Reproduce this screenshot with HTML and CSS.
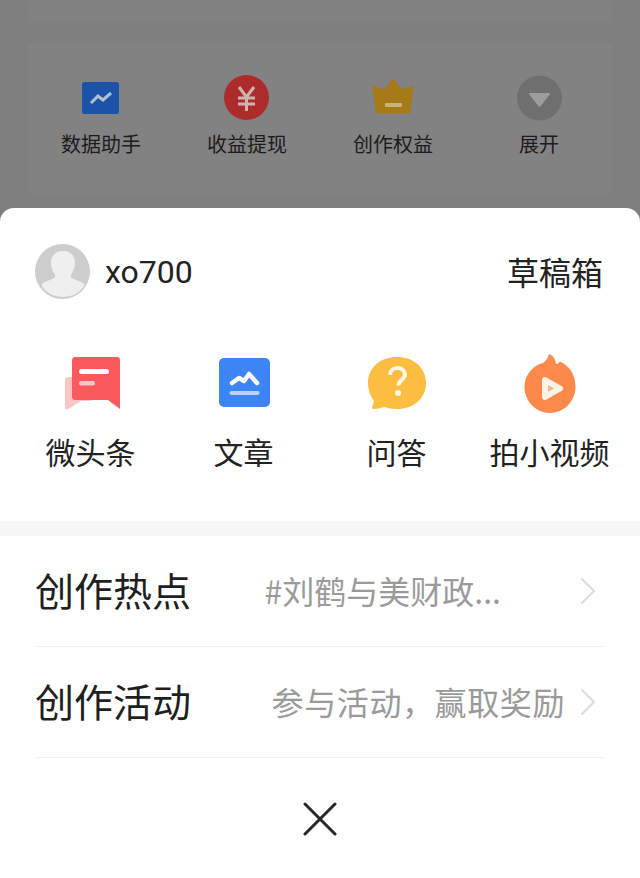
FILE: index.html
```html
<!DOCTYPE html>
<html lang="zh-CN">
<head>
<meta charset="utf-8">
<title>创作</title>
<link rel="stylesheet" href="styles.css">
</head>
<body>
<div class="screen">
  <div class="backdrop">
    <div class="card card-clipped"></div>
    <div class="card tools">
      <div class="tool">
        <svg class="tool-icon" viewBox="0 0 48 48"><rect x="5" y="6" width="37" height="32" rx="2.500" fill="#1c53a8"/><path d="M14 27l7-7 5 4 8-7" fill="none" stroke="#b4bfd0" stroke-width="3"/></svg>
        <span>数据助手</span>
      </div>
      <div class="tool">
        <svg class="tool-icon" viewBox="0 0 48 48"><circle cx="23.500" cy="21.500" r="22.500" fill="#ad2b2b"/><path d="M16 11l7.500 10 7.500-10M15 22h17M15 28h17M23.500 21v14" fill="none" stroke="#cfb3b3" stroke-width="3"/></svg>
        <span>收益提现</span>
      </div>
      <div class="tool">
        <svg class="tool-icon" viewBox="0 0 48 48"><path d="M24 3l9 11 11-4-3 27H7L4 10l11 4z" fill="#a67b17" stroke="#a67b17" stroke-linejoin="round"/><rect x="16" y="27" width="17" height="4" rx="1" fill="#c9b27a"/></svg>
        <span>创作权益</span>
      </div>
      <div class="tool">
        <svg class="tool-icon" viewBox="0 0 48 48"><circle cx="24.500" cy="22" r="22.500" fill="#6f6f6f"/><path d="M15 18h19L24.500 30z" fill="#9d9d9d" stroke="#9d9d9d" stroke-width="2" stroke-linejoin="round"/></svg>
        <span>展开</span>
      </div>
    </div>
  </div>

  <div class="sheet">
    <div class="user-row">
      <div class="user">
        <svg class="avatar" viewBox="0 0 55 55">
          <circle cx="27.500" cy="27.500" r="27.500" fill="#cdcdcd"/>
          <path d="M28 7c8 0 12 5 12 12 0 5-2 9-4 12-.5 2 0 3 3 4l9 4c1.500 .8 1.500 2 .5 4-4.500 6-12 10-20.500 10S11.500 49 7.500 43c-1-2-1-3.200 .5-4l9-4c3-1 3.500-2 3-4-2-3-4-7-4-12 0-7 4-12 12-12z" fill="#efefef"/>
        </svg>
        <span class="username">xo700</span>
      </div>
      <span class="drafts">草稿箱</span>
    </div>

    <div class="actions">
      <div class="action">
        <svg class="action-icon" viewBox="0 0 80 60">
          <path d="M14 26c0-1.500 1-3 3-3h22c2 0 3 1 3 3v18c0 2-1 3-3 3H30l-11 7c-3 1.500-5 2-5 0z" fill="#ffc4c4"/>
          <path d="M21 6c0-1.500 1-3 3-3h42c2 0 3 1 3 3v49L57 46H24c-2 0-3-1-3-3z" fill="#fb5a5c"/>
          <rect x="28" y="15" width="30" height="5" rx="2.500" fill="#fff"/>
          <rect x="28" y="27" width="16" height="4.500" rx="2.200" fill="#ffc4c4"/>
        </svg>
        <span>微头条</span>
      </div>
      <div class="action">
        <svg class="action-icon" viewBox="0 0 80 60">
          <rect x="15" y="4" width="51" height="49" rx="5" fill="#3d85f6"/>
          <path d="M28 29l7-5 5 3 5-7 8 9" fill="none" stroke="#fff" stroke-width="4.500" stroke-linecap="round" stroke-linejoin="round"/>
          <rect x="25.500" y="37" width="30" height="4" rx="2" fill="#b8d3fc"/>
        </svg>
        <span>文章</span>
      </div>
      <div class="action">
        <svg class="action-icon" viewBox="0 0 80 60">
          <path d="M40 3c16 0 29 10 29 26S56 55 40 55c-5 0-9-.8-13-2-3 1-7 2-10 2-2 0-2.500-1-1.500-3 1-2 1.500-4 1-6-3-4-5.500-10-5.500-17C11 13 24 3 40 3z" fill="#fdbe3f"/>
          <path d="M33 21c0-4 3-7 7.500-7s7.500 3 7.500 6.500c0 5-6.500 5.500-6.500 11" fill="none" stroke="#fff7e4" stroke-width="4"/>
          <circle cx="41" cy="39" r="3" fill="#fff7e4"/>
        </svg>
        <span>问答</span>
      </div>
      <div class="action">
        <svg class="action-icon" viewBox="0 0 80 60">
          <path d="M39 0c3 1 5 3 6 6l1 4c2 .5 3-1 3.500-2.500C59 11 65.500 20 65.500 33 65.500 47 54 59 40 59S14.500 47 14.500 33C14.500 20 24 11 33 9c3-2 5-5 6-9z" fill="#fd8a4b"/>
          <path d="M35 26l15 8.500-15 8.500z" fill="#fbb48a" stroke="#fff3e8" stroke-width="6" stroke-linejoin="round"/>
        </svg>
        <span>拍小视频</span>
      </div>
    </div>

    <div class="band"></div>

    <div class="rows">
      <div class="row">
        <span class="row-title">创作热点</span>
        <span class="row-note row-note-hot">#刘鹤与美财政...</span>
        <svg class="chevron" viewBox="0 0 16 28"><path d="M1.500 1.500L14 14 1.500 26.500" fill="none" stroke="#dcdcdc" stroke-width="2"/></svg>
      </div>
      <div class="row">
        <span class="row-title">创作活动</span>
        <span class="row-note row-note-wide">参与活动&#xFF0C;赢取奖励</span>
        <svg class="chevron" viewBox="0 0 16 28"><path d="M1.500 1.500L14 14 1.500 26.500" fill="none" stroke="#dcdcdc" stroke-width="2"/></svg>
      </div>
    </div>

    <div class="close">
      <svg class="close-icon" viewBox="0 0 34 34"><path d="M2 2l30 30M32 2L2 32" fill="none" stroke="#262626" stroke-width="3" stroke-linecap="round"/></svg>
    </div>
  </div>
</div>
</body>
</html>
```

FILE: styles.css
```css
* {
  box-sizing: border-box;
}

html,
body {
  margin: 0;
  padding: 0;
}

body {
  font-family: "Noto Sans CJK SC", "Noto Sans", sans-serif;
  background: #7f7f7f;
}

.screen {
  width: 640px;
  height: 878px;
  display: flex;
  flex-direction: column;
  overflow: hidden;
}

.backdrop {
  height: 208px;
  flex: none;
  padding: 0 28px;
  display: flex;
  flex-direction: column;
  gap: 20px;
  background: #7f7f7f;
}

.card {
  background: #828282;
  border-radius: 4px;
}

.card-clipped {
  height: 23px;
}

.tools {
  height: 150px;
  display: grid;
  grid-template-columns: repeat(4, 1fr);
  padding-top: 33px;
}

.tool {
  display: flex;
  flex-direction: column;
  align-items: center;
  font-size: 20px;
  line-height: 28px;
  color: #1c1c1c;
}

.tool-icon {
  width: 48px;
  height: 48px;
  margin-bottom: 6px;
  overflow: visible;
}

.sheet {
  flex: 1;
  display: flex;
  flex-direction: column;
  background: #fff;
  border-radius: 14px 14px 0 0;
}

.user-row {
  display: flex;
  justify-content: space-between;
  align-items: center;
  padding: 36px 37px 0 35px;
}

.user {
  display: flex;
  align-items: center;
  gap: 15px;
}

.avatar {
  width: 55px;
  height: 55px;
}

.username {
  font-family: Roboto, sans-serif;
  font-size: 32px;
  color: #222;
}

.drafts {
  font-size: 32px;
  line-height: 44px;
  padding-bottom: 2px;
  color: #222;
}

.actions {
  display: grid;
  grid-template-columns: repeat(4, 153px);
  padding: 55px 13px 0 14px;
  height: 222px;
}

.action {
  display: flex;
  flex-direction: column;
  align-items: center;
  font-size: 30px;
  line-height: 42px;
  color: #222;
  white-space: nowrap;
}

.action-icon {
  width: 80px;
  height: 60px;
  margin-bottom: 16px;
}

.band {
  height: 15px;
  flex: none;
  background: #f7f7f7;
}

.rows {
  padding: 0 35px;
}

.row {
  height: 111px;
  display: flex;
  align-items: center;
  border-bottom: 1px solid #f1f1f1;
}

.row-title {
  font-size: 39px;
  padding-bottom: 4px;
  color: #1f1f1f;
  flex: 1;
}

.row-note {
  font-size: 32px;
  padding-bottom: 2px;
  color: #9a9a9a;
}

.row-note-hot {
  margin-right: 64px;
}

.row-note-wide {
  letter-spacing: 0.6px;
}

.chevron {
  width: 16px;
  height: 28px;
  margin: 0 9px 0 15px;
}

.close {
  display: flex;
  justify-content: center;
  padding-top: 44px;
}

.close-icon {
  width: 34px;
  height: 34px;
}
```
